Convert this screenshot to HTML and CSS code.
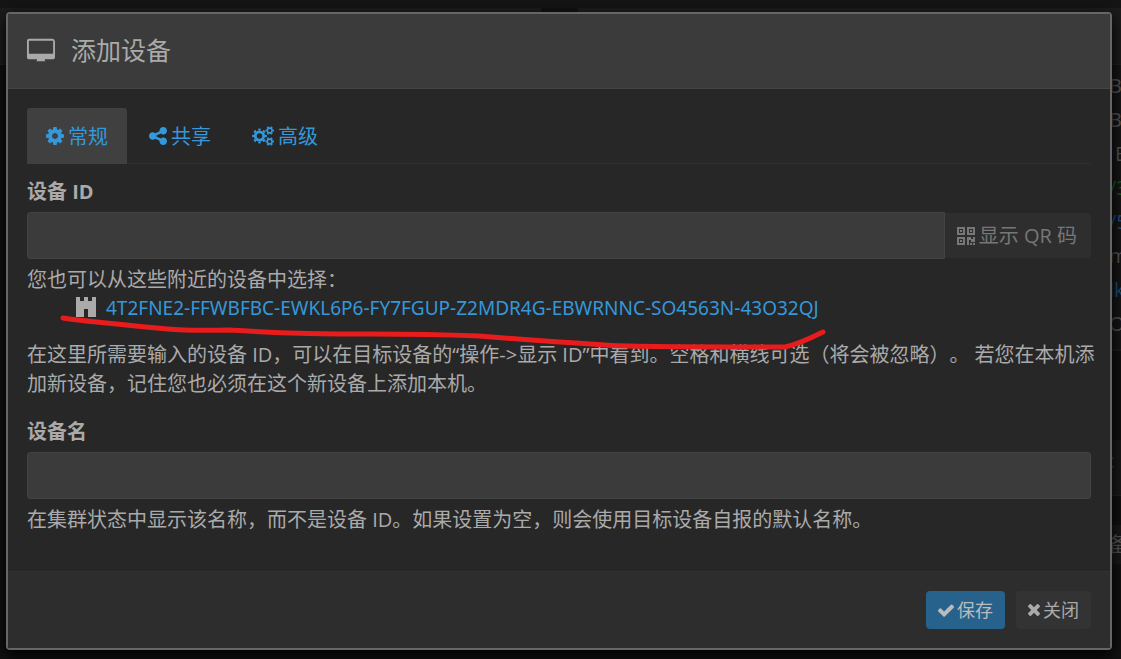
FILE: index.html
```html
<!DOCTYPE html>
<html lang="zh-CN">
<head>
<meta charset="utf-8">
<meta name="viewport" content="width=device-width, initial-scale=1">
<title>添加设备</title>
<link rel="stylesheet" href="styles.css">
</head>
<body>
<svg class="sprite" aria-hidden="true">
  <symbol id="cog" viewBox="128 128 1536 1536"><path d="M1152 896q0-106-75-181t-181-75-181 75-75 181 75 181 181 75 181-75 75-181zm512-109v222q0 12-8 23t-20 13l-185 28q-19 54-39 91 35 50 107 138 10 12 10 25t-9 23q-27 37-99 108t-94 71q-12 0-26-9l-138-108q-44 23-91 38-16 136-29 186-7 28-36 28h-222q-14 0-24.500-8.500t-11.500-21.500l-28-184q-49-16-90-37l-141 107q-10 9-25 9-14 0-25-11-126-114-165-168-7-10-7-23 0-12 8-23 15-21 51-66.500t54-70.500q-27-50-41-99l-183-27q-13-2-21-12.500t-8-23.500v-222q0-12 8-23t19-13l186-28q14-46 39-92-40-57-107-138-10-12-10-24 0-10 9-23 26-36 98.500-107.500t94.500-71.500q13 0 26 10l138 107q44-23 91-38 16-136 29-186 7-28 36-28h222q14 0 24.500 8.500t11.500 21.500l28 184q49 16 90 37l142-107q9-9 24-9 13 0 25 10 129 119 165 170 7 8 7 22 0 12-8 23-15 21-51 66.500t-54 70.500q26 50 41 98l183 28q13 2 21 12.500t8 23.500z"/></symbol>
</svg>

<div class="backdrop" aria-hidden="true">
  <div class="backdrop-nav"></div>
  <div class="backdrop-columns">
    <div class="backdrop-left"><div class="backdrop-card"></div></div>
    <div class="backdrop-right">
      <div class="backdrop-card"></div>
      <ul class="backdrop-list">
        <li>B</li><li>B</li><li class="indent">E</li><li class="green">/3</li><li class="blue">/5</li><li>m</li><li class="blue">lk</li><li>O</li>
      </ul>
      <div class="backdrop-row purple">:</div>
      <div class="backdrop-button">备</div>
    </div>
  </div>
</div>

<main class="modal" role="dialog" aria-labelledby="title">
  <header class="modal-header">
    <svg class="icon-desktop" viewBox="-64 0 1920 1536" aria-hidden="true"><path d="M1728 992v-832q0-13-9.500-22.500t-22.500-9.500h-1600q-13 0-22.500 9.500t-9.500 22.500v832q0 13 9.500 22.500t22.500 9.500h1600q13 0 22.500-9.500t9.500-22.500zm128-832v1088q0 66-47 113t-113 47h-544q0 37 16 77.500t32 50.500h-608q32-90 32-128h-544q-66 0-113-47t-47-113v-1088q0-66 47-113t113-47h1600q66 0 113 47t47 113z"/></svg>
    <h1 id="title">添加设备</h1>
  </header>

  <form class="modal-form">
    <div class="modal-body">
      <nav class="tabs">
        <a class="tab active" href="#general"><svg class="icon-cog"><use href="#cog"/></svg>常规</a>
        <a class="tab" href="#sharing"><svg class="icon-cog" viewBox="128 128 1536 1536"><path d="M1344 1024q133 0 226.500 93.500t93.500 226.500-93.500 226.500-226.500 93.500-226.500-93.500-93.500-226.500q0-12 2-34l-360-180q-92 86-218 86-133 0-226.500-93.500t-93.500-226.500 93.500-226.500 226.500-93.500q126 0 218 86l360-180q-2-22-2-34 0-133 93.500-226.500t226.500-93.500 226.500 93.500 93.500 226.500-93.500 226.500-226.500 93.500q-126 0-218-86l-360 180q2 22 2 34t-2 34l360 180q92-86 218-86z"/></svg>共享</a>
        <a class="tab" href="#advanced"><svg class="icon-cogs" viewBox="0 0 22 20"><g fill="none" stroke="currentColor"><circle cx="7.500" cy="10" r="4.200" stroke-width="2.800"/><circle cx="7.500" cy="10" r="6.400" stroke-width="2" pathLength="64" stroke-dasharray="4 4" stroke-dashoffset="2"/><circle cx="17.700" cy="4.500" r="2.400" stroke-width="1.600"/><circle cx="17.700" cy="4.500" r="3.600" stroke-width="1.400" pathLength="48" stroke-dasharray="4 4" stroke-dashoffset="2"/><circle cx="17.700" cy="15.500" r="2.400" stroke-width="1.600"/><circle cx="17.700" cy="15.500" r="3.600" stroke-width="1.400" pathLength="48" stroke-dasharray="4 4" stroke-dashoffset="2"/></g></svg>高级</a>
      </nav>

      <div class="field">
        <label for="device-id">设备 ID</label>
        <div class="input-group">
          <input id="device-id" type="text">
          <button class="qr-button" type="button" disabled><svg class="icon-qr" viewBox="0 0 18 18" aria-hidden="true"><path fill-rule="evenodd" d="M0 0h8v8H0zM2 2v4h4V2zM3 3h2v2H3zM10 0h8v8h-8zM12 2v4h4V2zM13 3h2v2h-2zM0 10h8v8H0zM2 12v4h4v-4zM3 13h2v2H3zM10 10h4v2h2v-2h2v5h-4v-2h-2v5h-2zM13 16h2v2h-2zM16 16h2v2h-2z"/></svg>显示 QR 码</button>
        </div>
        <div class="nearby">
          <p>您也可以从这些附近的设备中选择：</p>
          <ul class="nearby-list">
            <li><svg class="identicon" viewBox="0 0 5 5" preserveAspectRatio="none" aria-hidden="true"><path d="M0 0h1v1h1V0h1v1h1V0h1v5H3V3H2v2H0z"/></svg><a href="#device">4T2FNE2-FFWBFBC-EWKL6P6-FY7FGUP-Z2MDR4G-EBWRNNC-SO4563N-43O32QJ</a></li>
          </ul>
          <svg class="marker" viewBox="0 0 768 38" aria-hidden="true"><path d="M4 5C30 9 70 12 108 16Q130 18 170 17C205 19 230 21 310 21Q370 21 420 23Q480 28 546 32C570 34 690 34 726 34Q740 31 764 19"/></svg>
        </div>
        <p class="help">在这里所需要输入的设备 ID，可以在目标设备的“操作-&gt;显示 ID”中看到。空格和横线可选（将会被忽略）。 若您在本机添加新设备，记住您也必须在这个新设备上添加本机。</p>
      </div>

      <div class="field">
        <label for="device-name">设备名</label>
        <input id="device-name" type="text">
        <p class="help">在集群状态中显示该名称，而不是设备 ID。如果设置为空，则会使用目标设备自报的默认名称。</p>
      </div>
    </div>

    <footer class="modal-footer">
      <button class="button primary" type="submit"><svg viewBox="121 300 1550 1222" class="icon-check" aria-hidden="true"><path d="M1671 566q0 40-28 68l-724 724-136 136q-28 28-68 28t-68-28l-136-136-362-362q-28-28-28-68t28-68l136-136q28-28 68-28t68 28l294 295 656-657q28-28 68-28t68 28l136 136q28 28 28 68z"/></svg>保存</button>
      <button class="button" type="button"><svg viewBox="302 366 1188 1188" class="icon-times" aria-hidden="true"><path d="M1490 1322q0 40-28 68l-136 136q-28 28-68 28t-68-28l-294-294-294 294q-28 28-68 28t-68-28l-136-136q-28-28-28-68t28-68l294-294-294-294q-28-28-28-68t28-68l136-136q28-28 68-28t68 28l294 294 294-294q28-28 68-28t68 28l136 136q28 28 28 68t-28 68l-294 294 294 294q28 28 28 68z"/></svg>关闭</button>
    </footer>
  </form>
</main>
</body>
</html>
```
FILE: styles.css
```css
* { box-sizing: border-box; }

body {
  margin: 0;
  padding: 12px 9px 8px 6px;
  min-height: 100vh;
  background: #111;
  color: #aaa;
  font: 20px/29px "Open Sans", "Noto Sans CJK SC", sans-serif;
  text-spacing-trim: space-all;
  overflow: hidden;
}

p, ul, h1 { margin: 0; padding: 0; }
ul { list-style: none; }
a { color: #3498db; text-decoration: none; }
svg { fill: currentColor; flex: none; }
.sprite { position: absolute; width: 0; height: 0; }

/* Dimmed page behind the dialog */
.backdrop {
  position: absolute;
  inset: 0;
  overflow: hidden;
  color: #555;
}
.backdrop-nav { height: 8px; background: #141414; }
.backdrop-columns {
  display: grid;
  grid-template-columns: 541px 1fr;
  column-gap: 37px;
}
.backdrop-card { height: 57px; background: #1c1c1c; border-bottom: 1px solid #222; }
.backdrop-list {
  height: 286px;
  padding: 4px 0 0 531px;
  background: #161616;
  border-bottom: 2px solid #1e1e1e;
  line-height: 34px;
}
.backdrop-list li { white-space: nowrap; }
.indent { padding-left: 6px; }
.green { color: #17611f; }
.blue { color: #1b5080; }
.purple { color: #45305f; }
.backdrop-row {
  margin-top: 89px;
  height: 56px;
  padding: 6px 0 0 532px;
  background: #191919;
  border-bottom: 1px solid #222;
}
.backdrop-button {
  margin-top: 29px;
  height: 39px;
  padding: 5px 0 0 530px;
  background: #191919;
}

.modal {
  position: relative;
  border: 2px solid #666;
  border-radius: 4px;
  background: #272727;
  box-shadow: 0 6px 16px #000;
}
.modal-header {
  display: flex;
  align-items: center;
  gap: 16px;
  height: 75px;
  padding: 0 19px 3px;
  background: #3b3b3b;
  border-bottom: 1px solid #444;
}
.icon-desktop { width: 28px; height: 24px; }
h1 { font-size: 25px; line-height: 36px; font-weight: 400; }

.modal-body { padding: 19px 19px 37px; }
.tabs { display: flex; gap: 3px; height: 56px; border-bottom: 1px solid #303030; }
.tab {
  display: flex;
  align-items: center;
  gap: 4px;
  height: 56px;
  padding: 0 19px;
}
.tab.active { background: #404040; border-radius: 3px 3px 0 0; }
.icon-cog { width: 18px; height: 18px; }
.icon-cogs { width: 22px; height: 20px; }

.field { margin-top: 12px; }
.field + .field { margin-top: 18px; }
label { display: block; height: 36px; font-weight: 700; line-height: 32px; }
input {
  display: block;
  width: 100%;
  height: 47px;
  padding: 8px 12px;
  border: 1px solid #434343;
  border-radius: 3px;
  background: #3b3b3b;
  color: inherit;
  font: inherit;
}
.input-group { display: flex; align-items: center; }
.input-group input { flex: 1; min-width: 0; border-radius: 3px 0 0 3px; }
button { border: 0; font: inherit; color: inherit; display: flex; align-items: center; }
.qr-button {
  gap: 4px;
  height: 45px;
  padding: 0 14px 0 12px;
  border-radius: 0 4px 4px 0;
  background: #2e2e2e;
  color: #777;
}
.icon-qr { width: 18px; height: 18px; }

.nearby { position: relative; padding-top: 6px; }
.nearby-list li { display: flex; align-items: center; gap: 10px; padding-left: 49px; }
.nearby-list a { font-family: "Noto Sans", sans-serif; font-size: 19px; }
.identicon { width: 20px; height: 20px; margin-bottom: 4px; }
.marker {
  position: absolute;
  left: 32px;
  top: 54px;
  width: 768px;
  height: 38px;
  fill: none;
  stroke: #e81c1c;
  stroke-width: 5;
  stroke-linecap: round;
  stroke-linejoin: round;
}
.help { margin: 17px -10px 0 0; }
input + .help { margin-top: 6px; }

.modal-footer {
  display: flex;
  justify-content: flex-end;
  gap: 11px;
  padding: 19px;
  background: #2d2d2d;
  border-top: 1px solid #323232;
}
.button {
  gap: 3px;
  height: 38px;
  padding: 0 12px;
  border-radius: 4px;
  background: #333;
  font-size: 18px;
}
.primary { background: #27628d; color: #bbb; }
.icon-check { width: 16px; height: 13px; }
.icon-times { width: 12px; height: 12px; }
```
